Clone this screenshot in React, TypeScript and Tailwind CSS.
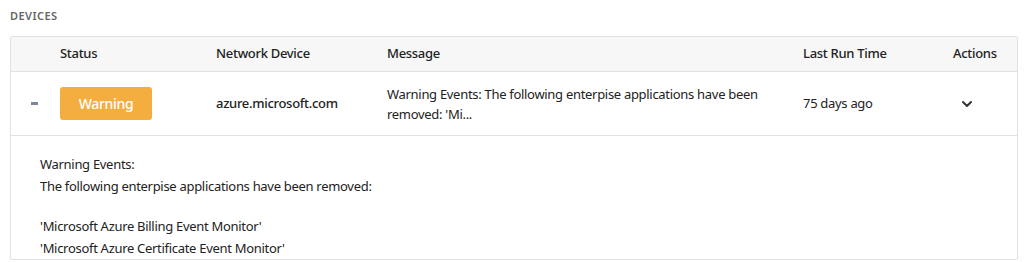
import { ChevronDown } from "lucide-react";

const font = { fontFamily: '"Noto Sans", "Open Sans", sans-serif' };

export default function App() {
  return (
    <div className="bg-white w-[1028px] h-[262px] px-[10px] pt-[9px] tracking-[-0.3px]" style={font}>
      <h2 className="text-[11px] font-semibold tracking-[0.04em] text-[#666] leading-[14px]">
        DEVICES
      </h2>
      <div className="mt-[13px] border border-[#e1e1e1] rounded-[2px] text-[13px] text-[#222]">
        <div className="grid grid-cols-[49px_156px_171px_416px_150px_1fr] h-[35px] items-center bg-[#f7f7f7] border-b border-[#e1e1e1] font-medium">
          <div />
          <div>Status</div>
          <div>Network Device</div>
          <div>Message</div>
          <div>Last Run Time</div>
          <div>Actions</div>
        </div>
        <div className="grid grid-cols-[49px_156px_171px_416px_150px_1fr] h-[64px] items-center border-b border-[#e1e1e1]">
          <div className="pl-[20px]">
            <div className="w-[7px] h-[3px] bg-[#7c8798]" />
          </div>
          <div>
            <div className="w-[92px] h-[33px] rounded-[3px] bg-[#f3ae3f] text-white text-[14px] font-medium flex items-center justify-center">
              Warning
            </div>
          </div>
          <div className="font-medium">azure.microsoft.com</div>
          <div className="leading-[20px] pr-[40px]">
            Warning Events: The following enterpise applications have been removed: 'Mi...
          </div>
          <div>75 days ago</div>
          <div className="pl-[6px]">
            <ChevronDown size={16} strokeWidth={3} className="text-[#333]" />
          </div>
        </div>
        <div className="pl-[29px] pt-[17px] leading-[22px]">
          <div>Warning Events:</div>
          <div>The following enterpise applications have been removed:</div>
          <div className="h-[18px]" />
          <div>'Microsoft Azure Billing Event Monitor'</div>
          <div>'Microsoft Azure Certificate Event Monitor'</div>
        </div>
      </div>
    </div>
  );
}
